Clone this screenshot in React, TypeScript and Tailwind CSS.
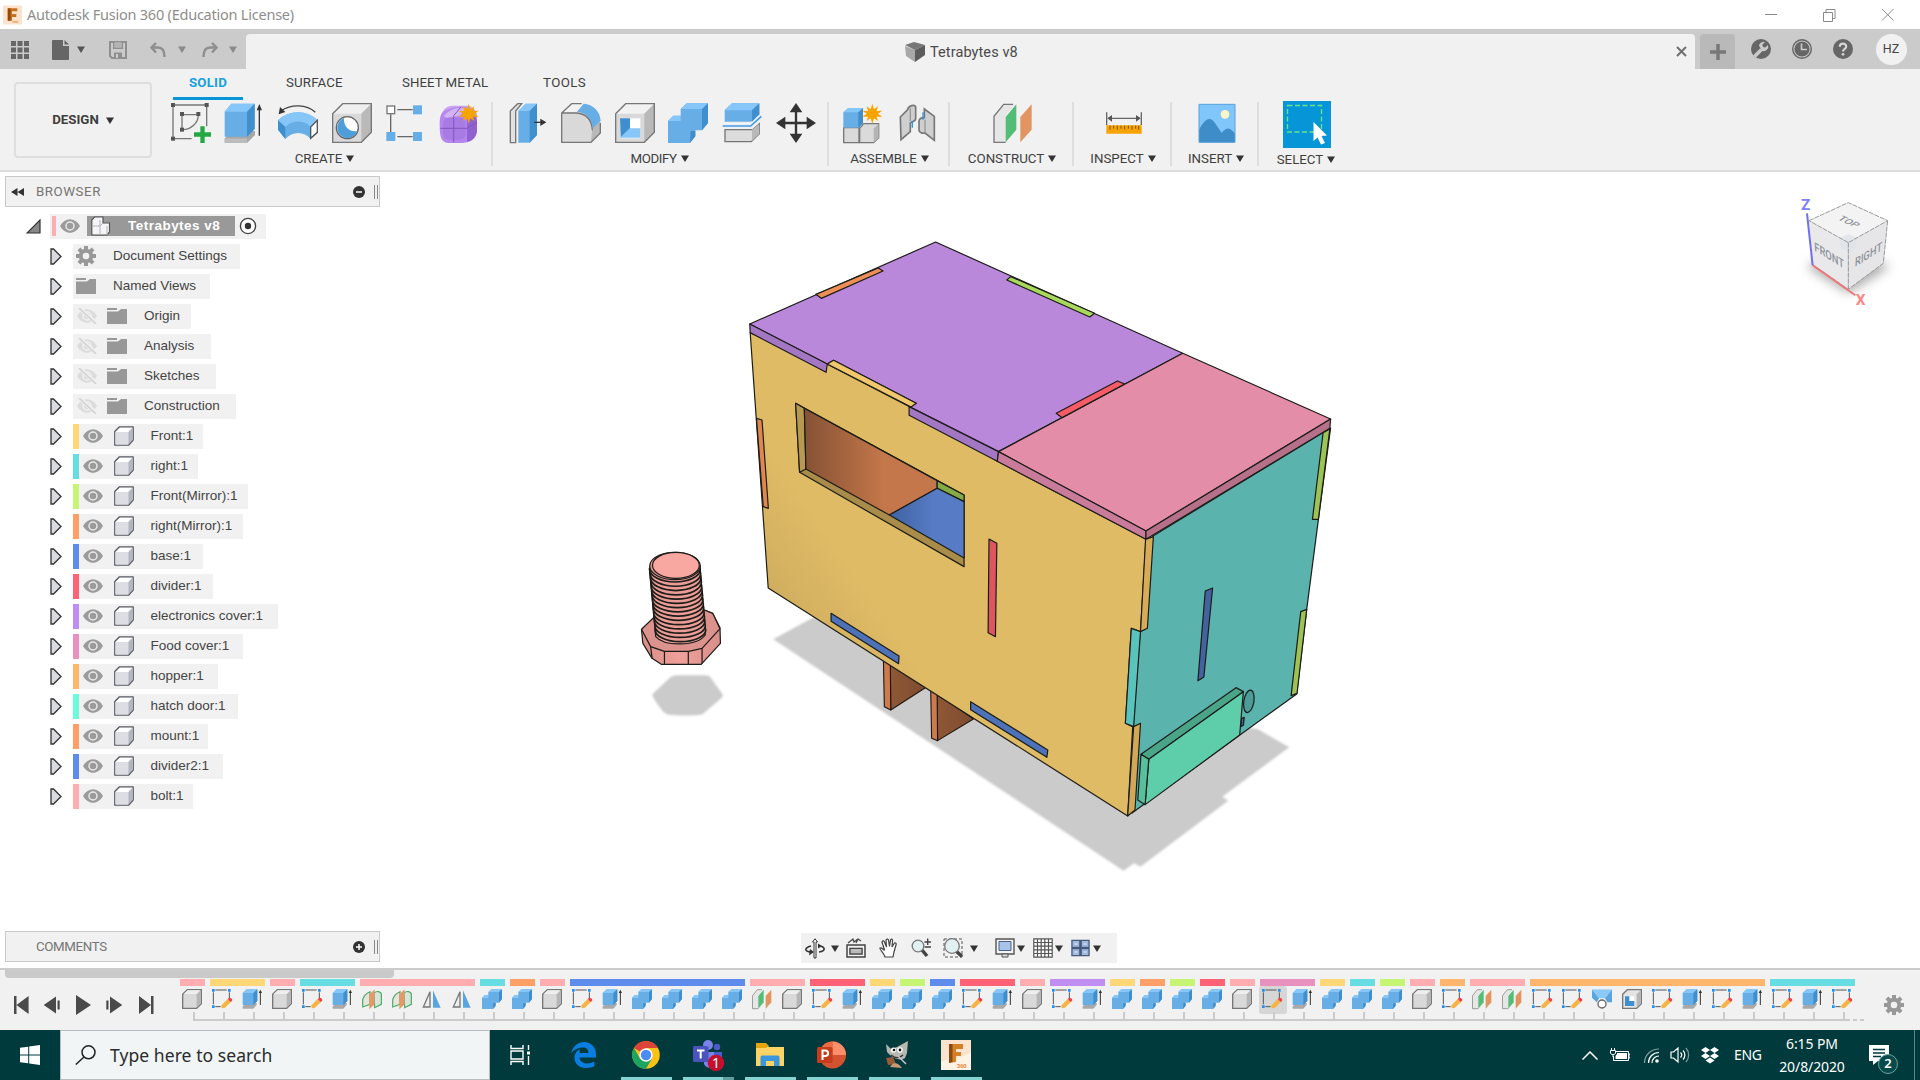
import type { ReactNode } from "react";

type IconProps = { children: ReactNode; box?: string; className?: string };

const Svg = ({ children, box = "0 0 120 120", className = "h-10 w-10" }: IconProps) => (
  <svg viewBox={box} className={`block shrink-0 overflow-visible ${className}`} fill="none">
    {children}
  </svg>
);

const Caret = ({ className = "text-[#333]" }: { className?: string }) => (
  <svg viewBox="0 0 8 7" className={`block h-[7px] w-2 shrink-0 ${className}`}>
    <path d="M0 0.5h8L4 7z" fill="currentColor" />
  </svg>
);

const STAR = "M0-30 5-13 17-22 13-8 30-9 17 0 30 9 13 9 17 22 5 14 0 30-5 14-17 22-13 9-30 9-17 0-30-9-13-8-17-22-5-13z";

/* ---------- ribbon icons, drawn on a 120 unit grid ---------- */

const SketchIcon = () => (
  <Svg>
    <path d="M6 6H107V70M6 6V107H62" stroke="#777" strokeWidth="4" />
    <path d="M33 35H82M33 35V80M82 35C82 60 60 80 35 80" stroke="#777" strokeWidth="4" />
    {[[6, 6], [107, 6], [6, 107], [33, 33], [82, 33], [33, 80]].map(([x, y]) => (
      <rect key={`${x}-${y}`} x={x - 6} y={y - 6} width="12" height="12" fill="#555" />
    ))}
    <path d="M88 70h13v18h19v13h-19v19H88v-19H69V88h19z" fill="#24a846" />
  </Svg>
);

const ExtrudeIcon = () => (
  <Svg>
    <path d="M2 106 24 88 93 84V96L70 119H2z" fill="#a6a6a6" />
    <path d="M2 106H69V119H2z" fill="#bcbcbc" />
    <path d="M2 26 22 2H92V78L69 101H2z" fill="#68aee6" />
    <path d="M2 26 22 2H92L69 26z" fill="#86c6f9" />
    <path d="M69 26 92 2V78L69 101z" fill="#3f8fce" />
    <path d="M106 98V10" stroke="#333" strokeWidth="4" />
    <path d="M98 22 106 3 114 22z" fill="#333" />
  </Svg>
);

const RevolveIcon = () => (
  <Svg>
    <path d="M112 28C85 3 40 3 8 24" stroke="#444" strokeWidth="4" />
    <path d="M2 34 6 12 22 27z" fill="#333" />
    <path d="M0 52C32 20 88 20 119 52V90L98 108C80 84 42 84 22 108L0 80z" fill="#68aee6" />
    <path d="M0 52C32 20 88 20 119 52L98 72C78 50 42 50 22 72z" fill="#86c6f9" />
    <path d="M0 52 22 72V108L0 80z" fill="#3f8fce" />
    <path d="M98 72 118 52V88L98 106z" fill="#fff" stroke="#555" strokeWidth="4" />
  </Svg>
);

const HoleIcon = () => (
  <Svg>
    <path d="M2 32 32 2H118V88L88 118H2z" fill="#d9d9d9" />
    <path d="M2 32 32 2H118L88 32z" fill="#efefef" />
    <path d="M88 32 118 2V88L88 118z" fill="#b9b9b9" />
    <path d="M2 32 32 2H118V88L88 118H2z" stroke="#777" strokeWidth="4" />
    <circle cx="46" cy="74" r="33" fill="#fff" stroke="#666" strokeWidth="4" />
    <path d="M36 45A31 31 0 1 0 76 84C58 88 34 76 36 45z" fill="#4d9edb" />
  </Svg>
);

const PatternIcon = () => (
  <Svg>
    <path d="M34 20H80M14 34V88M34 101H80" stroke="#666" strokeWidth="4" />
    <rect x="3" y="9" width="23" height="23" fill="#fff" stroke="#777" strokeWidth="4" />
    <rect x="81" y="7" width="27" height="27" fill="#68aee6" />
    <rect x="1" y="87" width="27" height="27" fill="#68aee6" />
    <rect x="81" y="87" width="27" height="27" fill="#68aee6" />
  </Svg>
);

const FormIcon = () => (
  <Svg>
    <rect x="8" y="8" width="106" height="106" rx="32" fill="#c9a5f3" />
    <path d="M2 62C2 30 12 24 30 18 60 8 110 4 114 50V84C110 108 96 118 72 120H30C6 118 2 104 2 62z" fill="#b587ec" />
    <path d="M84 40C100 30 112 40 114 56V84C110 104 100 114 84 116z" fill="#9162cf" />
    <path d="M14 40C30 18 58 10 84 16L62 38 24 44z" fill="#d2b3f5" />
    <rect x="12" y="44" width="68" height="66" rx="18" fill="#a87ae4" />
    <path d="M44 38V118M4 76H84L114 58M44 38 66 12" stroke="#8455bd" strokeWidth="3" />
    <path d={STAR} transform="translate(89 32)" fill="#f7a400" />
  </Svg>
);

const PressPullIcon = () => (
  <Svg>
    <path d="M10 24 32 2H44L26 24V119H10z" fill="#e2e2e2" stroke="#777" strokeWidth="4" />
    <path d="M34 24 56 2H90V96L68 119H34z" fill="#68aee6" />
    <path d="M34 24 56 2H90L68 24z" fill="#86c6f9" />
    <path d="M68 24 90 2V96L68 119z" fill="#3f8fce" />
    <path d="M82 58H106" stroke="#333" strokeWidth="4" />
    <path d="M100 47 118 58 100 69z" fill="#333" />
  </Svg>
);

const FilletIcon = () => (
  <Svg>
    <path d="M2 30 32 2H70C100 8 118 40 118 88L90 118H2z" fill="#d9d9d9" />
    <path d="M2 30 32 2H70L48 26z" fill="#f2f2f2" />
    <path d="M94 76 118 56V88L90 118z" fill="#b9b9b9" />
    <path d="M48 26 68 2C96 4 118 24 119 54L96 76C92 46 74 28 48 26z" fill="#68aee6" />
    <path d="M62 2H32L2 30V118H90L118 90V60M2 30H46C74 32 92 50 94 82" stroke="#777" strokeWidth="4" />
  </Svg>
);

const ShellIcon = () => (
  <Svg>
    <path d="M2 32 32 2H118V88L88 118H2z" fill="#d9d9d9" />
    <path d="M2 32 32 2H118L88 32z" fill="#f2f2f2" />
    <path d="M88 32 118 2V88L88 118z" fill="#b9b9b9" />
    <path d="M2 32 32 2H118V88L88 118H2z" stroke="#777" strokeWidth="4" />
    <path d="M15 46H76V106H15z" fill="#fff" />
    <path d="M15 46H45V78L17 104z" fill="#3f8fce" />
    <path d="M15 104 44 76H76V104z" fill="#86c6f9" />
  </Svg>
);

const CombineShape = () => (
  <>
    <path d="M0 54 16 38H38V18L56 1H120V60L102 82H82V100L66 120H0z" fill="#68aee6" />
    <path d="M38 18 56 1H120L102 18zM0 54 16 38H38V54z" fill="#86c6f9" />
    <path d="M102 18 120 1V60L102 82zM68 84H82V100L66 120z" fill="#3f8fce" />
  </>
);

const CombineIcon = () => <Svg><CombineShape /></Svg>;

const SplitIcon = () => (
  <Svg>
    <path d="M8 22 30 1H112V34L88 56H8z" fill="#68aee6" />
    <path d="M8 22 30 1H112L90 22z" fill="#86c6f9" />
    <path d="M90 22 112 1V34L90 56z" fill="#3f8fce" />
    <path d="M2 69H86L118 40" stroke="#3f9be8" strokeWidth="5" />
    <path d="M9 80H92L112 62V92L88 116H9z" fill="#dcdcdc" stroke="#777" strokeWidth="4" />
    <path d="M90 80 112 62V92L90 114z" fill="#b9b9b9" />
  </Svg>
);

const MoveIcon = () => (
  <Svg>
    <path d="M60 16V104M16 60H104" stroke="#333" strokeWidth="7" />
    <path d="M60 0 79 28H41zM60 120 79 92H41zM0 60 28 41V79zM120 60 92 41V79z" fill="#333" />
  </Svg>
);

const ComponentIcon = () => (
  <Svg>
    <path d="M2 74H48V119H2z" fill="#dadada" stroke="#777" strokeWidth="4" />
    <path d="M50 76 62 62H107V104L92 119H50z" fill="#dadada" stroke="#777" strokeWidth="4" />
    <path d="M92 76 107 62V104L92 119z" fill="#b5b5b5" />
    <path d="M1 28 16 15H60V60L48 74H1z" fill="#68aee6" />
    <path d="M1 28 16 15H62L46 28z" fill="#86c6f9" />
    <path d="M46 28 60 16V60L46 74z" fill="#3f8fce" />
    <path d={STAR} transform="translate(88 32)" fill="#f7a400" />
  </Svg>
);

const JointIcon = () => (
  <Svg>
    <path d="M10 42 32 20C34 6 54 4 56 12V48C54 56 44 56 40 60V86L12 110z" fill="#cfcfcf" stroke="#777" strokeWidth="5" />
    <path d="M40 16V54" stroke="#999" strokeWidth="4" />
    <path d="M66 56C66 46 76 44 82 44V18L112 40V112L84 90C76 92 66 88 66 82z" fill="#cfcfcf" stroke="#777" strokeWidth="5" />
    <path d="M84 50V88" stroke="#999" strokeWidth="4" />
    <path d="M46 54V74M78 28V50" stroke="#2f94e6" strokeWidth="4" />
  </Svg>
);

const PlaneShape = () => (
  <>
    <path d="M3 40 32 4H66L38 36V118H3z" fill="#e6e6e6" />
    <path d="M38 118H3V40L32 4H60" stroke="#777" strokeWidth="4" />
    <path d="M38 42 70 4V80L38 118z" fill="#52bd77" />
    <path d="M82 42 116 4V80L82 118z" fill="#e29560" />
  </>
);

const MeasureIcon = () => (
  <Svg>
    <path d="M8 28V66M112 28V66M12 46H108" stroke="#666" strokeWidth="4" />
    <path d="M10 46 24 36V56zM110 46 96 36V56z" fill="#555" />
    <path d="M7 67H113V92H7z" fill="#f7a400" />
    <path d="M18 68V80M29 68V77M40 68V80M51 68V77M62 68V80M73 68V77M84 68V80M95 68V77M104 68V80" stroke="#7c5300" strokeWidth="3" />
  </Svg>
);

const ImageIcon = () => (
  <Svg>
    <path d="M6 4H114V118H6z" fill="#80c6fb" />
    <path d="M6 80C22 50 38 36 54 60L74 90C84 78 94 66 114 92V118H6z" fill="#3e8cc8" />
    <circle cx="84" cy="34" r="13" fill="#fbf7c4" />
    <path d="M6 4H114V118H6z" stroke="#5aa2da" strokeWidth="3" />
  </Svg>
);

const SelectIcon = () => (
  <div className="flex h-[47px] w-12 items-center justify-center bg-[#0696d7]">
    <svg viewBox="0 0 48 47" className="h-[47px] w-12" fill="none">
      <path d="M4.500 4.500H38.500V31H4.500z" stroke="#6fe08a" strokeWidth="1.300" strokeDasharray="5 2.500" />
      <path d="M30.500 21 44 34.500 38.500 35 42 42 38 43.500 34.500 36.500 30.500 40z" fill="#fff" />
    </svg>
  </div>
);

/* ---------- ribbon ---------- */

type Group = { label: string; width: string; icons: ReactNode[]; tracking?: string };

const groups: Group[] = [
  { label: "CREATE", width: "w-[338px] pl-px", icons: [<SketchIcon />, <ExtrudeIcon />, <RevolveIcon />, <HoleIcon />, <PatternIcon />, <FormIcon />] },
  { label: "MODIFY", width: "w-[336px]", tracking: "tracking-[-0.400px] -ml-[3px]", icons: [<PressPullIcon />, <FilletIcon />, <ShellIcon />, <CombineIcon />, <SplitIcon />, <MoveIcon />] },
  { label: "ASSEMBLE", width: "w-[121px]", icons: [<ComponentIcon />, <JointIcon />] },
  { label: "CONSTRUCT", width: "w-[124px]", icons: [<Svg><PlaneShape /></Svg>] },
  { label: "INSPECT", width: "w-[98px]", icons: [<MeasureIcon />] },
  { label: "INSERT", width: "w-[87px] pl-px", icons: [<ImageIcon />] },
  { label: "SELECT", width: "w-[94px]", icons: [<SelectIcon />] },
];

const TitleBar = () => (
  <header className="flex h-[29px] items-center bg-white pl-[3px] font-['Noto_Sans',sans-serif]">
    <svg viewBox="0 0 20 20" className="h-5 w-[19px]">
      <rect width="20" height="20" fill="#fbe3cd" />
      <path d="M5 3h10v3H9.500v3H14v3H9.500v4H5z" fill="#c9701d" />
      <path d="M5 3h3v13H5z" fill="#8e4a10" />
      <path d="M10 16.500h6v1.500h-6z" fill="#f2a057" />
    </svg>
    <span className="ml-[5px] text-[14.500px] tracking-[-0.230px] text-[#8d8d8d]">Autodesk Fusion 360 (Education License)</span>
    <svg viewBox="0 0 130 14" className="mr-[26px] ml-auto h-[14px] w-[130px]" fill="none" stroke="#8a8a8a">
      <path d="M1 6.500h12M59.500 4.500h9v9h-9zM62 4V1.500h9v9H69M118 1l11.500 11.500M129.500 1 118 12.500" />
    </svg>
  </header>
);

const TabBar = () => (
  <div className="flex h-10 bg-[#cbcbcb]">
    <div className="flex w-[246px] items-center pt-[1px] pl-[11px] text-[#666]">
      <svg viewBox="0 0 18 18" className="h-[18px] w-[18px]" fill="#666">
        {[0, 6.5, 13].map((x) => [0, 6.5, 13].map((y) => <rect key={`${x}-${y}`} x={x} y={y} width="5" height="5" />))}
      </svg>
      <svg viewBox="0 0 17 20" className="ml-[23px] h-5 w-[17px]" fill="#666">
        <path d="M1 0h10v6h6v13a1 1 0 0 1-1 1H1a1 1 0 0 1-1-1V1a1 1 0 0 1 1-1z" />
        <path d="M12.500 0 17 4.500h-4.500z" />
      </svg>
      <Caret className="ml-2 text-[#555]" />
      <svg viewBox="0 0 18 18" className="ml-6 h-[18px] w-[18px]" fill="none">
        <path d="M1 1h16v16H3l-2-2z" stroke="#8f8f8f" strokeWidth="2" />
        <path d="M4 1h10v7H4zM5 11.500h8V17H5z" fill="#8f8f8f" />
        <path d="M5.500 1.500h7v5h-7z" fill="#cbcbcb" />
        <path d="M6 3h6M6 5h6" stroke="#8f8f8f" strokeWidth=".8" />
        <path d="M7 13h2v4H7z" fill="#cbcbcb" />
      </svg>
      <svg viewBox="0 0 16 16" className="ml-[23px] h-4 w-4" fill="none" stroke="#8f8f8f" strokeWidth="2.400">
        <path d="M6 1 1.500 5.500 6 10.500M2 5.500h6c4 0 6.500 3 6.500 9.500" />
      </svg>
      <Caret className="ml-3 text-[#8a8a8a]" />
      <svg viewBox="0 0 16 16" className="ml-4 h-4 w-4" fill="none" stroke="#8f8f8f" strokeWidth="2.400">
        <path d="M10 1l4.500 4.500-4.500 5M14 5.500H8c-4 0-6.500 3-6.500 9.500" />
      </svg>
      <Caret className="ml-[11px] text-[#8a8a8a]" />
    </div>
    <div className="mt-[5px] flex w-[1449px] items-center rounded-t-[4px] bg-[#f1f1f1] pl-[659px]">
      <svg viewBox="0 0 20 20" className="h-5 w-5">
        <path d="M0 4 10 8V20L1 14z" fill="#a8a8a8" />
        <path d="M0 3 9 0 20 3 10 8z" fill="#777" />
        <path d="M20 3 10 8V20L20 13z" fill="#5c5c5c" />
      </svg>
      <span className="ml-[5px] pt-[2px] text-[14.500px] tracking-[0.100px] text-[#4a4a4a]">Tetrabytes v8</span>
      <svg viewBox="0 0 11 11" className="mr-2 ml-auto h-[11px] w-[11px]" stroke="#707070" strokeWidth="2">
        <path d="M1 1l9 9M10 1l-9 9" />
      </svg>
    </div>
    <div className="mt-[5px] ml-[5px] flex w-[35px] items-center justify-center rounded-t-[4px] bg-[#b9b9b9]">
      <svg viewBox="0 0 16 16" className="h-4 w-4" stroke="#777" strokeWidth="3.400"><path d="M8 0v16M0 8h16" /></svg>
    </div>
    <div className="flex items-center gap-[21px] pl-[15.500px]">
      <svg viewBox="0 0 20 20" className="h-5 w-5">
        <circle cx="10" cy="10" r="10" fill="#666" />
        <path d="M3.500 17.500 10.500 10.500" stroke="#cbcbcb" strokeWidth="3.600" />
        <path d="M8 6.500A4.600 4.600 0 0 1 14 3L11.300 5.800 12 8 14.300 8.600 17 6A4.600 4.600 0 0 1 11 11.800z" fill="#cbcbcb" />
      </svg>
      <svg viewBox="0 0 20 20" className="h-5 w-5">
        <circle cx="10" cy="10" r="9.300" fill="none" stroke="#666" strokeWidth="1.400" />
        <circle cx="10" cy="10" r="7.600" fill="#666" />
        <path d="M9.500 4.500V10.500H15" fill="none" stroke="#ccc" strokeWidth="1.600" />
      </svg>
      <svg viewBox="0 0 20 20" className="h-5 w-5">
        <circle cx="10" cy="10" r="10" fill="#666" />
        <path d="M6.800 7.800C6.800 3.500 13.300 3.700 13.200 7.500 13.200 10 10 9.600 10 12.600" fill="none" stroke="#d6d6d6" strokeWidth="2.200" />
        <circle cx="10" cy="15.300" r="1.400" fill="#d6d6d6" />
      </svg>
      <span className="ml-[2px] flex h-[31px] w-[31px] items-center justify-center rounded-full bg-[#f1f1f1] text-[12.500px] text-[#444]">HZ</span>
    </div>
  </div>
);

const Ribbon = () => (
  <div className="flex h-[103px] border-b-2 border-[#dedede] bg-[#f1f1f1] text-[13.300px] text-[#3f3f3f]">
    <div className="w-[155px] pt-[13px] pl-[14px]">
      <div className="flex h-[76px] w-[138px] items-center justify-center gap-[7px] rounded-[4px] border-2 border-[#dedede] font-bold">
        DESIGN <Caret />
      </div>
    </div>
    <div className="flex flex-col">
      <nav className="flex h-[32px] items-start pl-[18px] leading-[28px]">
        <span className="h-[30.500px] w-[70px] border-b-[3.500px] border-[#0696d7] text-center font-bold tracking-[0.200px] text-[#1b9fdc]">SOLID</span>
        <span className="ml-[43px] w-[116px] tracking-[0.150px]">SURFACE</span>
        <span className="w-[141px]">SHEET METAL</span>
        <span className="tracking-[0.400px]">TOOLS</span>
      </nav>
      <div className="flex">
        {groups.map((g, n) => (
          <section key={g.label} className={`relative flex h-[68px] flex-col items-center ${g.width}`}>
            <div className="flex h-[47px] items-center justify-center gap-[13.700px] pl-px">
              {g.icons.map((icon, i) => <div key={i}>{icon}</div>)}
            </div>
            <div className="mt-[2px] flex h-[22px] items-center gap-1">
              <span className={g.tracking}>{g.label}</span>
              <Caret />
            </div>
            {n < groups.length - 1 && <i className="absolute top-px right-0 h-16 w-[2px] bg-[#dedede]" />}
          </section>
        ))}
      </div>
    </div>
  </div>
);

/* ---------- browser tree ---------- */

const Expander = () => (
  <svg viewBox="0 0 12 17" className="h-[17px] w-3">
    <path d="M1 1H3.500L11 8.500 3.500 16H1z" fill="#d9dbe0" stroke="#333" strokeWidth="1.300" />
  </svg>
);
const Eye = () => (
  <svg viewBox="0 0 20 14" className="h-[14px] w-5">
    <path d="M0 7C5-2 15-2 20 7 15 16 5 16 0 7z" fill="#9b9b9b" />
    <circle cx="10" cy="7" r="4" fill="none" stroke="#e9e9e9" strokeWidth="1.500" />
  </svg>
);
const EyeOff = () => (
  <svg viewBox="0 0 20 16" className="h-4 w-5">
    <path d="M0 8C5-1 15-1 20 8 15 17 5 17 0 8z" fill="#dcdcdc" />
    <circle cx="10" cy="8" r="4" fill="none" stroke="#f1f1f1" strokeWidth="1.500" />
    <path d="M2 0 19 15" stroke="#f1f1f1" strokeWidth="4" />
    <path d="M2 0 19 16" stroke="#d6d6d6" strokeWidth="1.800" />
  </svg>
);
const Folder = () => (
  <svg viewBox="0 0 20 16" className="h-4 w-5" fill="#989898">
    <path d="M0 0h10v2H0zM0 3.500h11L14 1h6v15H0z" />
  </svg>
);
const Gear = () => (
  <svg viewBox="-10 -10 20 20" className="h-5 w-5">
    <circle r="5.300" fill="none" stroke="#989898" strokeWidth="4" />
    {[0, 45, 90, 135, 180, 225, 270, 315].map((a) => (
      <path key={a} d="M-2-10H2V-6H-2z" fill="#989898" transform={`rotate(${a})`} />
    ))}
  </svg>
);
const Cube = () => (
  <svg viewBox="0 0 20 20" className="h-5 w-5">
    <path d="M.8 5.500 5.500.8H19.200V14L14.500 19.200H.8z" fill="#fff" stroke="#55565e" strokeWidth="1.300" strokeLinejoin="round" />
    <path d="M1.500 6H14.300V18.500H1.500z" fill="#dcdee4" />
    <path d="M14.300 6 18.600 1.500V14L14.300 18.500z" fill="#b4b7c0" />
  </svg>
);

type Node = { name: string; width: string; bar?: string; kind: "gear" | "folder" | "hidden" | "part" };

const nodes: Node[] = [
  { name: "Document Settings", width: "w-[167px]", kind: "gear" },
  { name: "Named Views", width: "w-[137px]", kind: "folder" },
  { name: "Origin", width: "w-[118px]", kind: "hidden" },
  { name: "Analysis", width: "w-[138px]", kind: "hidden" },
  { name: "Sketches", width: "w-[143px]", kind: "hidden" },
  { name: "Construction", width: "w-[163px]", kind: "hidden" },
  { name: "Front:1", width: "w-[130px]", bar: "bg-[#ffd777]", kind: "part" },
  { name: "right:1", width: "w-[125px]", bar: "bg-[#66dde0]", kind: "part" },
  { name: "Front(Mirror):1", width: "w-[175px]", bar: "bg-[#c5f573]", kind: "part" },
  { name: "right(Mirror):1", width: "w-[170px]", bar: "bg-[#ff9f68]", kind: "part" },
  { name: "base:1", width: "w-[130px]", bar: "bg-[#5d8cec]", kind: "part" },
  { name: "divider:1", width: "w-[140px]", bar: "bg-[#ff6274]", kind: "part" },
  { name: "electronics cover:1", width: "w-[205px]", bar: "bg-[#c08df3]", kind: "part" },
  { name: "Food cover:1", width: "w-[170px]", bar: "bg-[#e891bf]", kind: "part" },
  { name: "hopper:1", width: "w-[145px]", bar: "bg-[#ffb56c]", kind: "part" },
  { name: "hatch door:1", width: "w-[165px]", bar: "bg-[#6cfadb]", kind: "part" },
  { name: "mount:1", width: "w-[135px]", bar: "bg-[#ff9f68]", kind: "part" },
  { name: "divider2:1", width: "w-[150px]", bar: "bg-[#5d8cec]", kind: "part" },
  { name: "bolt:1", width: "w-[120px]", bar: "bg-[#ffadb0]", kind: "part" },
];

const PanelHeader = ({ title, open }: { title: string; open: boolean }) => (
  <div className="flex h-[31px] w-[375px] items-center border border-[#c9c9c9] bg-[#f1f1f1] text-[13.300px] text-[#757575]">
    <div className="w-[30px] pl-[5px]">
      {open && <svg viewBox="0 0 13 8" className="h-2 w-[13px]" fill="#333"><path d="M6.500 0v8L0 4zM13 0v8L6.500 4z" /></svg>}
    </div>
    <span className={open ? "tracking-[0.550px]" : "tracking-[-0.350px]"}>{title}</span>
    <svg viewBox="0 0 12 12" className="mr-[9px] ml-auto h-3 w-3">
      <circle cx="6" cy="6" r="6" fill="#333" />
      <path d={open ? "M3 6h6" : "M3 6h6M6 3v6"} stroke="#fff" strokeWidth="1.500" />
    </svg>
    <i className="mr-[1px] h-[14px] w-[4px] border-x border-[#888]" />
  </div>
);

const BrowserTree = () => (
  <div className="font-['Liberation_Sans',Arial,sans-serif] text-[13.500px] text-[#444]">
    <div className="flex h-[30px] items-center pl-[26px]">
      <svg viewBox="0 0 15 15" className="h-[15px] w-[15px]"><path d="M14 1V14H1z" fill="#888" stroke="#333" strokeWidth="1.200" /></svg>
      <div className="ml-[9px] flex h-[25px] w-[216px] items-center bg-[#f1f1f1] pl-[2px]">
        <i className="h-5 w-1 bg-[#ffadb0]" />
        <span className="ml-1"><Eye /></span>
        <div className="ml-[7px] flex h-5 w-[148px] items-center bg-[#999] pl-1">
          <svg viewBox="0 0 20 20" className="h-5 w-5">
            <path d="M.8 4 3.500 1H12V7H18.500V16L16 19H.8z" fill="#f5f5f7" stroke="#555" strokeWidth="1.200" />
            <path d="M.8 10H9M9 19V10L12 7M9 4v6M16 10v9" fill="none" stroke="#b3b3ba" />
          </svg>
          <b className="ml-[17px] pt-px tracking-[0.480px] text-white">Tetrabytes v8</b>
        </div>
        <svg viewBox="0 0 18 18" className="ml-[4px] h-[18px] w-[18px]">
          <circle cx="9" cy="9" r="7.600" fill="#fff" stroke="#444" strokeWidth="1.400" />
          <circle cx="9" cy="9" r="3.200" fill="#333" />
        </svg>
      </div>
    </div>
    {nodes.map((n) => (
      <div key={n.name} className="flex h-[30px] items-center pl-[50px]">
        <Expander />
        <div className={`ml-[10.500px] flex h-[25px] items-center bg-[#f1f1f1] ${n.width}`}>
          {n.kind === "part" && (
            <>
              <i className={`h-[25px] w-[6px] ${n.bar}`} />
              <span className="ml-[4px]"><Eye /></span>
              <span className="ml-[11px]"><Cube /></span>
              <span className="ml-[17px] pt-px whitespace-nowrap">{n.name}</span>
            </>
          )}
          {n.kind === "hidden" && (
            <>
              <span className="ml-[4px]"><EyeOff /></span>
              <span className="ml-[10.500px]"><Folder /></span>
              <span className="ml-[17px] pt-px">{n.name}</span>
            </>
          )}
          {(n.kind === "gear" || n.kind === "folder") && (
            <>
              <span className="ml-[3.500px]">{n.kind === "gear" ? <Gear /> : <Folder />}</span>
              <span className="ml-[17px] pt-px whitespace-nowrap">{n.name}</span>
            </>
          )}
        </div>
      </div>
    ))}
  </div>
);

/* ---------- 3D model ---------- */

const threads = Array.from({ length: 15 }, (_, i) => i);

const Model = () => (
  <svg viewBox="0 172 1920 796" className="absolute inset-0 h-full w-full [&_*]:[vector-effect:non-scaling-stroke]" strokeLinejoin="round">
    <defs>
      <linearGradient id="inside" x1="0" x2="1"><stop offset="0" stopColor="#855234" /><stop offset=".6" stopColor="#c4774a" /><stop offset="1" stopColor="#c4774a" /></linearGradient>
      <linearGradient id="floor" x1="0" x2="1"><stop offset="0" stopColor="#4062a3" /><stop offset=".6" stopColor="#577cc5" /></linearGradient>
      <linearGradient id="leg" x1="0" x2="1"><stop offset="0" stopColor="#8f5836" /><stop offset="1" stopColor="#7d4c2f" /></linearGradient>
      <linearGradient id="frontface" gradientUnits="userSpaceOnUse" x1="755" y1="600" x2="835" y2="545"><stop offset="0" stopColor="#ceab5d" /><stop offset="1" stopColor="#dfbb66" /></linearGradient>
      <linearGradient id="head" x1="0" x2="1"><stop offset="0" stopColor="#d98e89" /><stop offset=".5" stopColor="#f0a09a" /><stop offset="1" stopColor="#d98e89" /></linearGradient>
      <filter id="soft"><feGaussianBlur stdDeviation="2.500" /></filter>
      <filter id="cubesoft" x="-50%" y="-50%" width="200%" height="200%"><feGaussianBlur stdDeviation="16" /></filter>
    </defs>

    <g transform="translate(630 530) scale(.4591 .3333)">
      <path d="M400 262 312 328 1075 1022 1098 1000 1112 1010 1303 812 1290 800 1436 652 1368 598 1000 500z" fill="#cbcbcb" filter="url(#soft)" />
      <path d="M49 497C52 508 70 545 80 553 90 558 150 558 158 553L200 503C204 498 202 492 198 486L176 443C172 437 168 436 160 436H104C96 436 92 438 86 444L54 486C50 490 49 493 49 497z" fill="#cbcbcb" filter="url(#soft)" />
      <g stroke="#1d1712" strokeWidth="1.100">
        <path d="M567 400 645 472 568 540z" fill="url(#leg)" />
        <path d="M552 390 567 400 568 540 554 530z" fill="#cd7b4c" />
        <path d="M669 490 748 567 670 632z" fill="url(#leg)" />
        <path d="M655 480 669 490 670 632 657 625z" fill="#cd7b4c" />
      </g>
    </g>

    <g stroke="#1c1c18" strokeWidth="1.200">
      <path d="M1153 536 1330.600 428 1318.400 519.300 1306.700 609.300 1296.700 694 1132 813 1133 727 1140 632z" fill="#5ab3ad" />
      <path d="M750.200 332.700 827 364 910 407 997 461 1146 539.300 1140.500 631.700 1131.300 628.300 1125.400 723.300 1132.700 726.700 1127.700 816 768.200 588z" fill="url(#frontface)" />
    </g>

    <g transform="translate(730 230) scale(.3954 .3333)" stroke="#1c1c18" strokeWidth="1.200">
      <path d="M520 36 1145 370 679 665 453 530 471 520 262 391 246 402 50 282z" fill="#ba88da" />
      <path d="M50 282 246 402 243 427 51 308zM453 530 679 665 676 694 453 556z" fill="#a377c4" />
      <path d="M262 391 471 520 458 531 246 402z" fill="#f0c76c" />
      <path d="M217 193 375 114 387 123 231 205z" fill="#ee8f58" />
      <path d="M710 140 922 250 910 261 700 150z" fill="#a9d95c" />
      <path d="M1145 370 1519 567 1052 903 679 665z" fill="#e38da9" />
      <path d="M679 665 1052 903V928L676 694z" fill="#c97b9b" />
      <path d="M1052 903 1519 567 1517 595 1052 928z" fill="#b77089" />
      <path d="M825 550 980 453 998 462 840 563z" fill="#f65b66" />
      <path d="M1500 608 1517 597 1488 868H1473z" fill="#9cc353" />
      <path d="M67 565 81 570 97 835 84 830z" fill="#e0874f" />
      <path d="M166 520 592 795V1010L176 727z" fill="#a98c49" />
      <path d="M166 520 188 535 192 717 176 727z" fill="#b79a50" />
      <path d="M188 535 524 752V775L403 855 192 717z" fill="url(#inside)" />
      <path d="M524 752 592 795V815L524 775z" fill="#84aa43" />
      <path d="M524 775 592 815V984L403 855z" fill="url(#floor)" />
    </g>

    <g transform="translate(630 530) scale(.4591 .3333)" stroke="#1c1c18" strokeWidth="1.200">
      <path d="M782 27 799 40 796 320 780 308z" fill="#dc5560" />
      <path d="M438 250 586 378 585 401 438 274zM742 515 910 660 908 682 742 539z" fill="#4e72b8" />
      <path d="M1123 28 1140 20 1127 295 1112 305z" fill="#d8ab57" />
      <path d="M1092 295 1112 305 1097 590 1079 580z" fill="#59c3bd" />
      <path d="M1097 590 1112 580 1100 840 1084 858z" fill="#d2a755" />
      <path d="M1461 245 1474 238 1453 490 1440 497z" fill="#9cc353" />
      <path d="M1253 183 1269 174 1250 441 1237 452z" fill="#43629f" />
      <ellipse cx="1348" cy="514" rx="11" ry="34" fill="#4c9d99" transform="rotate(6 1348 514)" />
      <path d="M1332 566 1338 562 1336 586 1330 590z" fill="#43629f" />
      <path d="M1113 673 1320 473 1336 485 1130 688z" fill="#4aa588" />
      <path d="M1130 688 1336 485 1328 615 1122 824z" fill="#5dcdaa" />
      <path d="M1113 673 1130 688 1122 824 1106 810z" fill="#57bf9c" />

      <path d="M25 298 50 265 162 240 180 250 196 293 197 340 155 403H68L48 385 28 340z" fill="url(#head)" />
      <path d="M25 298 50 265 162 240 180 250 196 296 157 355 128 364H75L45 350z" fill="#dd938d" />
      <path d="M45 350 48 385M75 364V402M127 364V403M157 355V401" />
      <path d="M42 115 56 320C75 350 145 350 164 315L152 105z" fill="#f0a19b" />
      <g fill="#eb9c96" strokeWidth="1.700">
        {threads.slice().reverse().map((i) => (
          <ellipse key={i} cx={98 + i * 0.85} cy={118 + i * 13} rx="55" ry={38 - i * 0.2} />
        ))}
      </g>
      <ellipse cx="98" cy="108" rx="55" ry="41" fill="#e2958f" />
      <ellipse cx="100" cy="106" rx="51" ry="39" fill="#f8a7a1" />
    </g>

    {/* orientation cube */}
    <g transform="translate(1640 0) scale(.3333)">
      <path d="M500 800 620 740 750 800 625 880z" fill="#777" opacity=".6" filter="url(#cubesoft)" />
      <path d="M507 662 625 608 743 662 625 728z" fill="#f3f3f4" />
      <path d="M507 662 625 728V868L519 794z" fill="#e9e9eb" />
      <path d="M625 728 743 662 730 790 625 868z" fill="#e6e6e8" />
      <path d="M600 714 625 702 650 714V742L625 754 600 742z" fill="#dfe3ea" opacity=".8" />
      <path d="M507 662 625 608 743 662 625 728zM625 728V868M743 662 730 790 625 868 519 794" fill="none" stroke="#999" strokeDasharray="5 1" />
      <path d="M501 640 518 796" stroke="#7070ec" strokeWidth="2" />
      <path d="M518 796 646 886" stroke="#f07878" strokeWidth="2" />
      <g fontFamily="Roboto, sans-serif" fontWeight="500" textAnchor="middle">
        <text x="497" y="630" fontSize="46" fill="#8080ff" fontWeight="700">Z</text>
        <text x="662" y="916" fontSize="46" fill="#ff8585" fontWeight="700">X</text>
        <g fill="#8e9299">
          <text transform="matrix(.9 .42 -.75 .5 619 671)" fontSize="32">TOP</text>
          <text transform="matrix(.8 .5 .05 1.050 568 779)" fontSize="35">FRONT</text>
          <text transform="matrix(.8 -.5 -.05 1.050 685 776)" fontSize="35">RIGHT</text>
        </g>
      </g>
    </g>
  </svg>
);

/* ---------- navigation bar ---------- */

const NavBar = () => (
  <div className="absolute top-[761px] left-[801px] flex h-[30px] w-[316px] items-center bg-[#f1f1f1] pl-1">
    <Svg box="0 0 20 20" className="h-5 w-5">
      <path d="M10 .8 12.500 4H11V20H9V4H7.500z" fill="#fff" stroke="#333" />
      <path d="M6 8C-2 10 0 14 7 14M14 14C22 13 20 8 13 8" stroke="#333" strokeWidth="1.600" />
      <path d="M5 11 9 14 4 17.500zM13 5.500V10.500L17 8z" fill="#333" />
    </Svg>
    <Caret className="ml-[6px] text-[#333]" />
    <Svg box="0 0 20 20" className="ml-[7px] h-5 w-5">
      <path d="M1 7H19V19H1zM4 10.500H16V16H4z" stroke="#444" strokeWidth="1.500" />
      <path d="M5 11.500H15V15H5z" fill="#bbb" />
      <path d="M2 5 7 1 8 4 12 1 15 3M12 1 10 5" stroke="#444" strokeWidth="1.200" />
    </Svg>
    <Svg box="0 0 20 20" className="ml-[13px] h-5 w-5">
      <path d="M6 19C5 15 0 11 1 10 3 9 4 12 5.500 12L3 4C4 2 5 3 5.500 4L7.500 9 7 2C8 .5 9.300 1 9.500 2L10.500 8.500 11.500 2C12.500 .5 13.800 1.500 13.500 3L13 9 15.500 5C17 4.500 17.500 5.500 17 7L15 14 14 19z" fill="#fff" stroke="#444" strokeWidth="1.200" />
    </Svg>
    <Svg box="0 0 20 20" className="ml-[11.500px] h-5 w-5">
      <path d="M11 12 16 18" stroke="#444" strokeWidth="3.500" />
      <circle cx="7" cy="8" r="5.800" fill="#e1f0f0" stroke="#777" strokeWidth="1.300" />
      <path d="M13.500 4H20M16.700 .5V7M13.500 9H20" stroke="#444" strokeWidth="1.400" />
    </Svg>
    <Svg box="0 0 20 20" className="ml-3 h-5 w-5">
      <path d="M1 1H19V19H1z" stroke="#555" strokeDasharray="3 2" />
      <path d="M13 13 19 18.500" stroke="#444" strokeWidth="3.500" />
      <circle cx="9" cy="8" r="7.300" fill="#e1f0f0" stroke="#777" strokeWidth="1.300" />
    </Svg>
    <Caret className="ml-[7px] text-[#333]" />
    <Svg box="0 0 20 20" className="ml-[17px] h-5 w-5">
      <path d="M1 1H19V16H1z" fill="#f4f4f4" stroke="#555" strokeWidth="1.400" />
      <path d="M4 3.500H16V12.500H4z" fill="#a9c4e8" stroke="#4a618a" />
      <path d="M7 16H13V19H7z" fill="#ddd" stroke="#555" />
    </Svg>
    <Caret className="ml-[2px] text-[#333]" />
    <Svg box="0 0 20 20" className="ml-[8px] h-5 w-5">
      <path d="M.8 .8H19.200V19.200H.8zM4.500 1V19M8.200 1V19M11.800 1V19M15.500 1V19M1 4.500H19M1 8.200H19M1 11.800H19M1 15.500H19" fill="#fff" stroke="#555" strokeWidth="1.200" />
    </Svg>
    <Caret className="ml-[2px] text-[#333]" />
    <Svg box="0 0 20 18" className="ml-[8.500px] h-[18px] w-[19px]">
      <path d="M1 1H9.300V8.300H1zM10.700 1H19V8.300H10.700zM1 9.700H9.300V17H1zM10.700 9.700H19V17H10.700z" fill="#a9c4e8" stroke="#46597a" strokeWidth="1.400" />
      <path d="M3 3H7.500V6.500H3zM12.500 3H17V6.500H12.500zM3 11.500H7.500V15H3zM12.500 11.500H17V15H12.500z" fill="#c3d6f0" stroke="#8297bb" strokeWidth=".6" />
    </Svg>
    <Caret className="ml-[3px] text-[#333]" />
  </div>
);

/* ---------- timeline ---------- */

type Op = "box" | "sketch" | "extrude" | "mid" | "mirror" | "combine" | "plane" | "loft" | "shell";

const OpIcon = ({ op }: { op: Op }) => (
  <svg viewBox="0 0 60 60" className="block h-5 w-5 overflow-visible" fill="none">
    {op === "box" && (
      <>
        <path d="M2 16 16 2H58V44L44 58H2z" fill="#d9d9d9" stroke="#777" strokeWidth="4" />
        <path d="M44 16 56 4V43L44 56z" fill="#b5b5b5" />
        <path d="M5 15 17 4H55L44 15z" fill="#eee" />
      </>
    )}
    {op === "sketch" && (
      <>
        <path d="M10 3H44M4 10V46M52 10V30M10 53H26" stroke="#555" strokeWidth="3" />
        <path d="M0 0h8v8H0zM48 0h8v8H48zM0 49h8v8H0z" fill="#1e90f0" />
        <path d="M30 58 27 50 47 30 57 39 38 57z" fill="#f5b445" />
        <path d="M47 30 52 26C60 26 62 32 60 36L56 39z" fill="#f0404a" />
      </>
    )}
    {op === "extrude" && (
      <>
        <path d="M2 52 14 42H44V48L34 59H2z" fill="#a9a9a9" />
        <path d="M2 12 14 1H46V36L34 48H2z" fill="#68aee6" />
        <path d="M2 12 14 1H46L34 12z" fill="#86c6f9" />
        <path d="M34 12 46 1V36L34 48z" fill="#3f8fce" />
        <path d="M55 48V8" stroke="#333" strokeWidth="3" />
        <path d="M50 12 55 2 60 12z" fill="#333" />
      </>
    )}
    {op === "mid" && (
      <>
        <path d="M2 54V32C6 18 14 12 24 8V46z" fill="#e8e4dc" stroke="#4aa86a" strokeWidth="3.500" />
        <path d="M36 12C46 4 54 8 58 14V46L38 56z" fill="#d6e6da" stroke="#4aa86a" strokeWidth="3.500" />
        <path d="M22 16 38 1V46L22 61z" fill="#e29a68" />
      </>
    )}
    {op === "mirror" && (
      <>
        <path d="M24 8V54H4z" fill="#eee" stroke="#777" strokeWidth="4" />
        <path d="M33 4 56 56H33z" fill="#5ba5de" />
      </>
    )}
    {op === "combine" && <g transform="scale(.5)"><CombineShape /></g>}
    {op === "plane" && <g transform="scale(.5)"><PlaneShape /></g>}
    {op === "loft" && (
      <>
        <path d="M0 2H60V40H46L38 26H22L14 40 0 26z" fill="#5ba5de" />
        <path d="M0 2H60L40 28H20z" fill="#8bc9f8" />
        <circle cx="30" cy="45" r="12" fill="#fff" stroke="#666" strokeWidth="4" />
      </>
    )}
    {op === "shell" && (
      <>
        <path d="M2 16 16 2H58V44L44 58H2z" fill="#e4e4e4" stroke="#777" strokeWidth="4" />
        <path d="M44 16 56 4V43L44 56z" fill="#b5b5b5" />
        <path d="M9 22H37V51H9z" fill="#fff" />
        <path d="M9 22H22V36H37V51H9z" fill="#3f8fce" />
      </>
    )}
  </svg>
);

const pink = "bg-[#ffadb0]", yellow = "bg-[#ffd777]", cyan = "bg-[#66dde0]", orange = "bg-[#ff9f68]", blue = "bg-[#5d8cec]";
const red = "bg-[#ff6274]", green = "bg-[#c5f573]", purple = "bg-[#c08df3]", rose = "bg-[#e891bf]", amber = "bg-[#ffb56c]";

const runs: [string, Op[]][] = [
  [pink, ["box"]],
  [yellow, ["sketch", "extrude"]],
  [pink, ["box"]],
  [cyan, ["sketch", "extrude"]],
  [pink, ["mid", "mid", "mirror", "mirror"]],
  [cyan, ["combine"]],
  [orange, ["combine"]],
  [pink, ["box"]],
  [blue, ["sketch", "extrude", "combine", "combine", "combine", "combine"]],
  [pink, ["plane", "box"]],
  [red, ["sketch", "extrude"]],
  [yellow, ["combine"]],
  [green, ["combine"]],
  [blue, ["combine"]],
  [red, ["sketch", "extrude"]],
  [pink, ["box"]],
  [purple, ["sketch", "extrude"]],
  [yellow, ["combine"]],
  [orange, ["combine"]],
  [green, ["combine"]],
  [red, ["combine"]],
  [pink, ["box"]],
  [rose, ["sketch", "extrude"]],
  [yellow, ["combine"]],
  [cyan, ["combine"]],
  [green, ["combine"]],
  [pink, ["box"]],
  [amber, ["sketch"]],
  [pink, ["plane", "plane"]],
  [amber, ["sketch", "sketch", "loft", "shell", "sketch", "extrude", "sketch", "extrude"]],
  [cyan, ["sketch", "extrude", "sketch"]],
];

const Timeline = () => (
  <div className="h-[62px] border-t-2 border-[#cbcbcb] bg-[#f1f1f1]">
    <div className="ml-[5px] h-[8px] w-[389px] rounded-b-[4px] bg-[#c9c9c9]" />
    <div className="flex pt-px">
      <svg viewBox="0 0 177.500 50" className="h-[50px] w-[177.500px]" fill="#4a4a4a">
        <path d="M14 17h2.500v18H14zM28.600 17v18L16.500 26zM56 17.500v17L43.700 26zM57.500 21.500h2.200v9h-2.200zM76 16v20l15-10zM106.300 21.500h2.200v9h-2.200zM110 17.500v17l12.300-8.500zM139 17v18l12-9zM151 17h2.500v18H151z" />
      </svg>
      <div>
        <div className="flex">
          {runs.map(([color, ops], r) => (
            <div key={r}>
              <div className={`mx-[2.500px] h-[7px] ${color}`} />
              <div className="flex">
                {ops.map((op, i) => {
                  const selected = color === rose && i === 0;
                  return (
                    <div key={i} className="w-[30px]">
                      <div className={`mx-px flex h-[28px] items-center justify-center rounded-[3px] ${selected ? "bg-[#d6d6d6]" : ""}`}>
                        <div className="-mt-[2px] -ml-px"><OpIcon op={op} /></div>
                      </div>
                      <div className="mx-auto -mt-[2px] h-[7px] w-[2px] translate-x-[1px] bg-[#cbcbcb]" />
                    </div>
                  );
                })}
              </div>
            </div>
          ))}
        </div>
        <div className="ml-[15px] flex gap-[3px]">
          <i className="h-[2px] w-[1657px] bg-[#cbcbcb]" />
          <i className="h-[2px] w-[4px] bg-[#cbcbcb]" />
          <i className="h-[2px] w-[4px] bg-[#cbcbcb]" />
        </div>
      </div>
      <div className="mt-4 ml-auto pr-[16px]"><Gear /></div>
    </div>
  </div>
);

/* ---------- taskbar ---------- */

const apps: ReactNode[] = [
  <Svg box="-14 -14 28 28" className="-ml-[2px] h-7 w-7">
    <circle r="13.800" fill="#fbc116" />
    <path d="M0 0-12-6.900A13.800 13.800 0 0 1 12-6.900H0z" fill="#dc4437" />
    <path d="M-12-6.900A13.800 13.800 0 0 0 0 13.800L6 3.500H-6z" fill="#1da462" />
    <circle r="6.700" fill="#fff" /><circle r="5.200" fill="#4b8bf5" />
  </Svg>,
  <Svg box="0 0 32 32" className="-ml-px h-8 w-8">
    <circle cx="16" cy="6" r="5" fill="#7b83eb" /><circle cx="25" cy="8" r="3.200" fill="#5059c9" />
    <path d="M12 13H24V24C22 30 14 30 12 25z" fill="#7b83eb" /><path d="M22 13H30V22C28 25 24 25 22 24z" fill="#5059c9" />
    <rect x="1" y="7" width="15.500" height="16" rx="1.500" fill="#4b53bc" />
    <path d="M5 11.500H12.500M8.700 11.500V19.500" stroke="#fff" strokeWidth="2" />
    <circle cx="24" cy="24" r="8.300" fill="#c50f2e" />
    <text x="24" y="29" fontSize="14" fill="#fff" textAnchor="middle" fontFamily="Noto Sans, sans-serif">1</text>
  </Svg>,
  <Svg box="0 0 28 24" className="-ml-[2px] h-6 w-7">
    <path d="M0 1H10L13 4H28V23H0z" fill="#fcd364" /><path d="M0 0H10L13 3 10 5H0z" fill="#e5a50a" />
    <path d="M4.500 23V15C4.500 13 5 12.500 7 12.500H21C23 12.500 23.500 13 23.500 15V23H18V18H10V23z" fill="#3a96dd" />
  </Svg>,
  <Svg box="0 0 29 28" className="-ml-[2px] h-7 w-[29px]">
    <circle cx="15.500" cy="14" r="13.500" fill="#d35230" /><path d="M15.500 .5A13.500 13.500 0 0 1 29 14H15.500z" fill="#ff8f6b" /><path d="M15.500 .5A13.500 13.500 0 0 0 4 7V14H15.500z" fill="#ed6c47" />
    <rect y="6" width="15.500" height="16" rx="1.500" fill="#c43e1c" />
    <path d="M5.500 19V9.500H8.300C12 9.500 12 15 8.300 15H5.500" stroke="#fff" strokeWidth="2" />
  </Svg>,
  <Svg box="0 0 26 28" className="ml-1 h-7 w-[26px]">
    <path d="M2 3 7 8 13 6 24 0 23 12 21 17C17 20 10 18 6 14L3 11z" fill="#b8b8b2" />
    <circle cx="9.500" cy="9" r="2.600" fill="#fff" /><circle cx="16" cy="9" r="2.800" fill="#fff" /><circle cx="10" cy="9" r="1.300" fill="#111" /><circle cx="16" cy="9" r="1.400" fill="#111" />
    <path d="M7 14C12 18 16 17 19 14" stroke="#333" strokeWidth="1.200" />
    <path d="M2 17 9 16 12 23 4 24z" fill="#9a5b3b" /><path d="M6 26C10 20 14 22 18 27z" fill="#c99a74" />
    <path d="M14 15 22 23" stroke="#c9c9c9" strokeWidth="1.500" />
  </Svg>,
  <Svg box="0 0 30 30" className="-ml-[2px] h-[30px] w-[30px]">
    <rect width="30" height="30" fill="#fbe3cd" />
    <path d="M0 22C10 16 20 20 30 12V30H0z" fill="#fff3e6" />
    <path d="M8 4H22V9H15V12H20V16H15V22L8 23z" fill="#d58027" /><path d="M8 4H11.500V22L8 23z" fill="#8e4a10" />
    <text x="16" y="28" fontSize="5.500" fontWeight="700" fill="#ee8330" fontFamily="Roboto, sans-serif">360</text>
  </Svg>,
];

const Taskbar = () => (
  <footer className="flex h-[50px] items-stretch bg-[#003a3c] font-['Noto_Sans',sans-serif] text-white">
    <div className="flex w-[60px] items-center pl-5">
      <svg viewBox="0 0 20 20" className="h-5 w-5" fill="#fff"><path d="M0 2.800 8.200 1.700V9.500H0zM9.200 1.500 20 0V9.500H9.200zM0 10.500H8.200V18.300L0 17.200zM9.200 10.500H20V20L9.200 18.500z" /></svg>
    </div>
    <div className="flex h-[49.500px] w-[430px] items-center border border-[#b5bcbd] bg-[#f1f5f6] pl-[14px]">
      <svg viewBox="0 0 21 20" className="h-5 w-[21px]" fill="none" stroke="#222" strokeWidth="1.500"><circle cx="13.500" cy="7.300" r="6.500" /><path d="M9 12 .8 19.500" /></svg>
      <span className="ml-[14px] text-[17.500px] tracking-[0.070px] text-[#2b2b2b]">Type here to search</span>
    </div>
    <div className="flex w-[131px] items-center pl-5">
      <svg viewBox="0 0 20 20" className="h-5 w-5" fill="none" stroke="#fff" strokeWidth="1.400">
        <path d="M1 0V3.500H13V0M1 6H13V14H1zM1 20V16.500H13V20M18.500 0V5M18.500 11V20" /><path d="M17 6.500h3v3h-3z" fill="#fff" stroke="none" />
      </svg>
      <svg viewBox="0 0 25 26" className="ml-[41px] h-[26px] w-[25px]" fill="#0a7ee0">
        <path d="M0 11.500C2 4 7 0 13 0 20 0 25 5 25 12V15.500H8.500C8.700 19 12 21.500 16 21.500 19 21.500 21.500 20.500 23.300 19.500V24.300C21 25.500 18 26 15 26 8 26 3.500 21.500 3.500 15.500 3.500 11.500 6 8.500 9 7 8.500 8.200 8.400 9.500 8.400 11H17.500C17.500 7.500 15.500 5.500 12 5.500 7 5.500 2.500 8 0 11.500z" />
      </svg>
    </div>
    {apps.map((a, i) => (
      <div key={i} className="relative mr-[11px] flex w-[51px] items-center justify-center">
        {a}
        <i className={`absolute bottom-0 left-0 h-[3px] bg-[#86d3d4] ${i === 1 ? "w-10" : "w-[51px]"}`} />
        {i === 1 && <i className="absolute right-0 bottom-0 h-[3px] w-[11px] bg-[#5f9fa0]" />}
      </div>
    ))}
    <div className="ml-auto flex items-center">
      <svg viewBox="0 0 16 9" className="h-[9px] w-4" fill="none" stroke="#fff" strokeWidth="1.500"><path d="M.5 8.500 8 1l7.500 7.500" /></svg>
      <svg viewBox="0 0 20 14" className="ml-3 h-[14px] w-5" fill="none" stroke="#fff"><path d="M5 3.500H18.500V12.500H3.500V8M18.500 6H20V10H18.500M1.500 0V2.500M4.500 0V2.500M.5 2.500H5.500V5C5.500 7 .5 7 .5 5zM3 6.500V9" /><path d="M7 5H17V11H5.500V8L7 6z" fill="#fff" stroke="none" /></svg>
      <svg viewBox="0 0 16 16" className="ml-[13px] h-4 w-4 -scale-x-100 overflow-visible" fill="none" stroke="#fff" strokeWidth="1.200"><g transform="translate(0 2)"><circle cx="2" cy="12" r="1.800" fill="#fff" stroke="none" /><path d="M0 7C4 7 7 10 7 14M0 3.500C6 3.500 10.500 8 10.500 14" /><path d="M0 0C8 0 14.500 6 14.500 14" opacity=".5" /></g></svg>
      <svg viewBox="0 0 20 18" className="ml-[11px] h-[18px] w-5" fill="none" stroke="#fff" strokeWidth="1.200"><path d="M1 6H3.500L8 2V16L3.500 12H1zM10.500 6.500C12 8 12 10 10.500 11.500M13 4.500C15.500 7 15.500 11 13 13.500" /><path d="M16 2C19.500 6 19.500 12 16 16" opacity=".5" /></svg>
      <svg viewBox="0 0 18 17" className="ml-[11px] h-[17px] w-[18px]" fill="#fff"><path d="M4.500 0 9 3 4.500 6 0 3zM13.500 0 18 3 13.500 6 9 3zM4.500 6 9 9 4.500 12 0 9zM13.500 6 18 9 13.500 12 9 9zM9 10.500 13.500 13.500 9 16.500 4.500 13.500z" /></svg>
      <span className="ml-[15px] w-[28px] text-sm tracking-[-0.300px]">ENG</span>
      <div className="ml-[12px] w-[76px] text-center text-sm leading-[23px] tracking-[-0.100px]"><div>6:15 PM</div><div>20/8/2020</div></div>
      <div className="relative ml-[19px] h-5 w-5">
        <svg viewBox="0 0 20 20" className="h-5 w-5"><path d="M0 0H20V16H9L4 20V16H0z" fill="#fff" /><path d="M4 4.500H16M4 8H16M4 11.500H12" stroke="#003a3c" strokeWidth="1.400" /></svg>
        <span className="absolute top-[9px] left-[9px] flex h-5 w-5 items-center justify-center rounded-full border border-[#6ea3a3] bg-[#084a4c] text-[13px] font-semibold">2</span>
      </div>
      <i className="ml-[25px] h-[50px] w-px bg-[#5f8586]" />
      <i className="w-[5px]" />
    </div>
  </footer>
);

export default function App() {
  return (
    <div className="flex h-[1080px] w-[1920px] flex-col overflow-hidden bg-white font-[Roboto,sans-serif]">
      <TitleBar />
      <TabBar />
      <Ribbon />
      <main className="relative h-[796px] bg-white">
        <Model />
        <div className="relative flex h-full flex-col pt-1">
          <div className="pl-[5px]"><PanelHeader title="BROWSER" open /></div>
          <div className="pt-1"><BrowserTree /></div>
          <div className="mt-auto pb-[6px] pl-[5px]"><PanelHeader title="COMMENTS" open={false} /></div>
        </div>
        <NavBar />
      </main>
      <Timeline />
      <Taskbar />
    </div>
  );
}
